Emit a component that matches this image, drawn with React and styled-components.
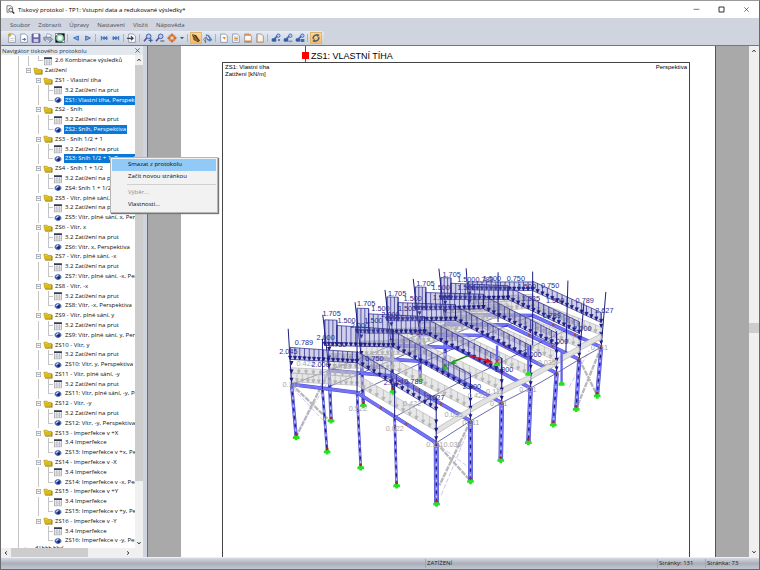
import React from "react";
import styled, { createGlobalStyle, css } from "styled-components";

const GlobalStyle = createGlobalStyle`
  * {
    box-sizing: border-box;
  }
  body {
    margin: 0;
    font-family: "Open Sans", "Noto Sans", sans-serif;
    font-size: 6px;
    color: #111;
  }
  button {
    margin: 0;
    padding: 0;
    border: 0;
    background: none;
    font: inherit;
    color: inherit;
  }
`;

const Window = styled.div`
  display: flex;
  flex-direction: column;
  height: 100vh;
  border: 1px solid #6a6a6a;
  border-top-color: #9a9a9a;
  background: #cfd4de;
  overflow: hidden;
`;

const TitleBar = styled.header`
  display: flex;
  align-items: center;
  height: 17px;
  padding-left: 5px;
  background: #fff;
`;

const Title = styled.h1`
  flex: 1;
  margin: 0 0 0 3px;
  font-size: 6px;
  font-weight: 400;
  color: #000;
`;

const WindowButton = styled.button`
  display: grid;
  place-items: center;
  width: 25px;
  height: 17px;
`;

const MenuBar = styled.nav`
  display: flex;
  align-items: center;
  gap: 8px;
  height: 13px;
  padding: 0 9px;
  color: #484d57;
`;

const ToolRow = styled.div`
  display: flex;
  height: 15px;
  border-bottom: 1px solid #777;
`;

const Tools = styled.div`
  display: flex;
  align-items: center;
  padding: 0 2px 0 5px;
  border-radius: 0 3px 3px 0;
  background: linear-gradient(#e6ebf4, #d3dae6 60%, #c5cddb);
`;

const Tool = styled.button`
  display: grid;
  place-items: center;
  width: ${(p) => (p.$narrow ? "8px" : "12px")};
  height: 12px;
  ${(p) =>
    p.$active &&
    css`
      background: linear-gradient(#fbdb9c, #f6b95a);
      box-shadow: 0 0 0 1px #e0b56c inset;
    `}
`;

const Divider = styled.span`
  width: 1px;
  height: 8px;
  margin: 0 2px 0 1px;
  background: #aab2c2;
`;

const Body = styled.div`
  display: flex;
  flex: 1;
  min-height: 0;
`;

const Navigator = styled.aside`
  display: flex;
  flex-direction: column;
  width: 142px;
  margin-right: 4px;
  background: #fff;
`;

const NavHeader = styled.div`
  display: flex;
  align-items: center;
  justify-content: space-between;
  height: 9px;
  padding: 0 1px;
  background: #e3e7ee;
  color: #30353f;
`;

const CloseButton = styled.button`
  width: 9px;
  height: 9px;
  line-height: 0;
`;

const TreeArea = styled.div`
  display: flex;
  flex: 1;
  min-height: 0;
`;

const Tree = styled.div`
  display: flex;
  flex-direction: column;
  flex: 1;
  min-width: 0;
  padding: 1px 0 0 12px;
  overflow: hidden;
`;

const Row = styled.div`
  display: flex;
  align-items: stretch;
  flex: 1 1 0;
  min-height: 0;
  white-space: nowrap;
  ${(p) =>
    p.$cut &&
    css`
      flex: 0 0 2px;
      overflow: hidden;
    `}
`;

const Guide = styled.span`
  flex: none;
  width: 10px;
  background:
    linear-gradient(#c4c4c4, #c4c4c4) 5px 0 / ${(p) => (p.$line ? "1px" : "0")} ${(p) => (p.$half ? "50%" : "100%")} no-repeat,
    linear-gradient(#c4c4c4, #c4c4c4) 5px 50% / ${(p) => (p.$branch ? "5px" : "0")} 1px no-repeat;
`;

const Expander = styled.button`
  display: grid;
  place-items: center;
  flex: none;
  width: 10px;
`;

const RowIcon = styled.span`
  display: grid;
  place-items: center;
  flex: none;
  width: 10px;
`;

const Label = styled.span`
  align-self: center;
  margin-left: 1px;
  padding: 0 1px;
  line-height: 9px;
  color: #0c0c0c;
  ${(p) =>
    p.$selected &&
    css`
      background: #0a78d7;
      color: #fff;
    `}
`;

const ScrollTrack = styled.div`
  display: flex;
  flex: none;
  flex-direction: ${(p) => (p.$across ? "row" : "column")};
  ${(p) => (p.$across ? "height" : "width")}: ${(p) => p.$size};
  background: #f0f0f0;
`;

const ScrollButton = styled.button`
  display: grid;
  place-items: center;
  flex: none;
  width: 10px;
  height: 10px;
  align-self: center;
`;

const Thumb = styled.div`
  flex: ${(p) => p.$grow};
  background: #cdcdcd;
`;

const Gap = styled.div`
  flex: ${(p) => p.$grow};
`;

const Viewer = styled.main`
  display: flex;
  flex: 1;
  min-width: 0;
  border-left: 1px solid #6d6d6d;
  background: #a9a9a9;
`;

const Sheet = styled.article`
  display: flex;
  flex-direction: column;
  flex: 1;
  min-width: 0;
  margin: 0 33px;
  padding: 0 25px 0 41px;
  border-right: 1px solid #555;
  background: #fff;
`;

const SheetHead = styled.div`
  display: flex;
  align-items: center;
  height: 16px;
  padding-left: 80px;
`;

const Marker = styled.span`
  align-self: stretch;
  width: 7px;
  background:
    linear-gradient(#f00, #f00) 0 6px / 7px 7px no-repeat,
    linear-gradient(#555, #555) 3px 0 / 1px 100% no-repeat;
`;

const SheetTitle = styled.h2`
  margin: 3px 0 0 2px;
  font: 400 9px/10px "Liberation Sans", sans-serif;
  color: #000;
`;

const Figure = styled.section`
  display: flex;
  flex-direction: column;
  flex: 1;
  min-height: 0;
  border: 1px solid #444;
  border-bottom: 0;
`;

const Caption = styled.div`
  display: flex;
  justify-content: space-between;
  padding: 1px 2px;
  font: 6px/7px "Liberation Sans", sans-serif;
  color: #000;
`;

const Drawing = styled.svg`
  flex: 1;
  width: 100%;
  min-height: 0;
`;

const StatusBar = styled.footer`
  display: grid;
  grid-template-columns: 424px 1fr 48px 54px;
  align-items: center;
  height: 12px;
  border-top: 1px solid #eceef2;
  background: linear-gradient(#d6dae2, #a9afba 50%, #c1c6d0);
  color: #222;
`;

const StatusCell = styled.span`
  padding-left: 1px;
  line-height: 9px;
  border-left: ${(p) => (p.$plain ? "0" : "1px solid #a0a6b1")};
`;

const Menu = styled.div`
  position: absolute;
  left: 110px;
  top: 157px;
  width: 108px;
  padding: 1px;
  border: 1px solid #b5b5b5;
  background: #f2f2f2;
  box-shadow: 1px 1px 1px #777;
`;

const MenuItem = styled.button`
  display: block;
  width: 100%;
  height: 12px;
  padding: 0 0 2px 16px;
  text-align: left;
  line-height: 10px;
  color: ${(p) => (p.disabled ? "#8c8c8c" : "#080808")};
  background: ${(p) => (p.$hover ? "#91c9f7" : "none")};
`;

const MenuRule = styled.hr`
  height: 1px;
  margin: 1px 0 2px 15px;
  border: 0;
  background: #d0d0d0;
`;

/* ---------- small icons ---------- */

const Icon = ({ children, size = 12 }) => (
  <svg width={size} height={size} viewBox="0 0 36 36" fill="none" aria-hidden="true">
    {children}
  </svg>
);

const Arrow = ({ turn = 0 }) => (
  <svg width="6" height="6" viewBox="0 0 18 18" fill="none" aria-hidden="true">
    <path d="M4 12l5-6 5 6" stroke="#444" strokeWidth="3" transform={`rotate(${turn} 9 9)`} />
  </svg>
);

const Sheetlet = ({ children, fill = "#fff" }) => (
  <Icon>
    <path d="M8 6h14l6 6v19H8z" fill={fill} stroke="#707a90" strokeWidth="2" />
    {children}
  </Icon>
);

const Lens = ({ children }) => (
  <Icon>
    <path d="M15 17L6 28" stroke="#5b4f9a" strokeWidth="5" />
    <circle cx="20" cy="13" r="7" fill="#b8cdf2" stroke="#4763a8" strokeWidth="3" />
    {children}
  </Icon>
);

const Key = ({ children }) => (
  <Icon>
    <path d="M14 20l10-10" stroke="#4a68b0" strokeWidth="5" />
    <circle cx="25" cy="11" r="5" fill="#bfd0f2" stroke="#4a68b0" strokeWidth="3" />
    <rect x="5" y="19" width="14" height="10" rx="4" fill="#365ba8" />
    {children}
  </Icon>
);

const FolderIcon = () => (
  <Icon size={10}>
    <path d="M5 11h12l3 3h14v17H8z" fill="#7d680c" />
    <path d="M3 8h12l3 4h13v15H7z" fill="#e6cb2e" stroke="#a58a10" strokeWidth="2" />
    <path d="M7 27L3 14h23l4 13z" fill="#d8b91e" />
  </Icon>
);

const TableIcon = () => (
  <Icon size={10}>
    <rect x="5" y="6" width="26" height="26" fill="#fff" stroke="#8a8a92" strokeWidth="2" />
    <path d="M4 8h28" stroke="#30354e" strokeWidth="6" />
    <path d="M5 18h26M5 25h26M14 10v22M23 10v22" stroke="#9a9aa2" strokeWidth="2" />
  </Icon>
);

const EyeIcon = () => (
  <Icon size={10}>
    <path d="M4 18c5-13 23-13 28 0c-5 13-23 13-28 0z" fill="#93a7dc" />
    <circle cx="18" cy="18" r="10" fill="#3a55a6" />
    <path d="M11 16h6v-6" stroke="#c9d5fa" strokeWidth="5" />
    <circle cx="20" cy="20" r="5" fill="#18265f" />
  </Icon>
);

const BoxIcon = () => (
  <svg width="5" height="5" viewBox="0 0 15 15" aria-hidden="true">
    <rect x="1" y="1" width="13" height="13" fill="#fff" stroke="#999" strokeWidth="2" />
    <path d="M4 7h7" stroke="#3c50a0" strokeWidth="2" />
  </svg>
);

const CrossIcon = () => (
  <svg width="7" height="7" viewBox="0 0 21 21" aria-hidden="true">
    <path d="M4 4l13 13M17 4L4 17" stroke="#333" strokeWidth="2" />
  </svg>
);

/* ---------- toolbar content ---------- */

const tools = [
  { name: "Nový", icon: <Sheetlet><path d="M6 9h10M11 4v10" stroke="#d9a514" strokeWidth="4" /><path d="M13 19h10M13 25h10" stroke="#9aa3b5" strokeWidth="2" /></Sheetlet> },
  { name: "Otevřít", icon: <Sheetlet><path d="M13 22h9l-3-4M22 22l-3 4" stroke="#365ba8" strokeWidth="3" /></Sheetlet> },
  { name: "Uložit", icon: <Icon><path d="M6 6h24v25H6z" fill="#6f68ad" stroke="#514a90" strokeWidth="2" /><path d="M11 6h14v10H11z" fill="#f4f4fb" /><path d="M11 21h14v9H11z" fill="#c9cbe4" /></Icon> },
  { name: "Tisk", icon: <Icon><path d="M12 15l4-10 12 4-3 10z" fill="#fff" stroke="#7b8499" strokeWidth="2" /><path d="M5 16l19-1 8 7-9 9-17-7z" fill="#a3aac2" stroke="#666e88" strokeWidth="2" /><path d="M12 25l9 4" stroke="#f2f4f8" strokeWidth="3" /></Icon> },
  { name: "Převzít", icon: <Icon><rect x="4" y="4" width="28" height="28" fill="#161616" /><circle cx="18" cy="18" r="9" fill="#fff" stroke="#8fe0b4" strokeWidth="5" /><path d="M5 5h8l-8 8zM31 31h-8l8-8z" fill="#fff" /></Icon> },
  null,
  { name: "Zpět", icon: <Icon><path d="M25 12v13L11 18z" fill="#8fb2e4" stroke="#3d6cba" strokeWidth="3" /></Icon> },
  { name: "Vpřed", icon: <Icon><path d="M11 12v13l14-7z" fill="#8fb2e4" stroke="#3d6cba" strokeWidth="3" /></Icon> },
  null,
  { name: "První", icon: <Icon><path d="M10 12v13M19 14v9l-6-5zM27 14v9l-6-5z" fill="#6a94d6" stroke="#3d6cba" strokeWidth="3" /></Icon> },
  { name: "Poslední", icon: <Icon><path d="M26 12v13M9 14v9l6-5zM17 14v9l6-5z" fill="#6a94d6" stroke="#3d6cba" strokeWidth="3" /></Icon> },
  null,
  { name: "Jít na", icon: <Sheetlet><path d="M3 19h17M15 13l6 6-6 6" stroke="#3c4458" strokeWidth="4" /></Sheetlet> },
  null,
  { name: "Hledat", icon: <Lens><path d="M20 25h12M26 19v12" stroke="#4763a8" strokeWidth="4" /></Lens> },
  { name: "Hledat další", icon: <Lens><path d="M19 27h12" stroke="#8a7d92" strokeWidth="5" /></Lens> },
  { name: "Posun", icon: <Icon><circle cx="18" cy="18" r="8" stroke="#e68640" strokeWidth="7" /><path d="M18 4v8M18 24v8M4 18h8M24 18h8" stroke="#a8501c" strokeWidth="3" /></Icon> },
  { name: "Více", narrow: true, icon: <Icon size={6}><path d="M6 12h24L18 26z" fill="#555" /></Icon> },
  null,
  { name: "Navigátor", active: true, icon: <Icon><path d="M6 7l12 2 12 17-6 5-13-7z" fill="#4c3a2e" /><path d="M10 9l13 17M8 15l13 13" stroke="#e79a35" strokeWidth="2" /></Icon> },
  { name: "Výběr", icon: <Icon><path d="M11 7l10 2 10 15-8 5-9-6z" fill="#5b82c4" /><path d="M15 12l5 9" stroke="#fff" strokeWidth="3" /><path d="M5 21l6-5v16z" fill="#fff" stroke="#445" strokeWidth="2" /></Icon> },
  null,
  { name: "Titulní list", icon: <Sheetlet><path d="M13 15h11l-5 8z" fill="#f08a28" /></Sheetlet> },
  { name: "Obsah", icon: <Sheetlet><path d="M12 15h12M12 25h12" stroke="#8b93a8" strokeWidth="2" /><path d="M13 20h11" stroke="#f08a28" strokeWidth="5" /></Sheetlet> },
  { name: "Záhlaví", icon: <Sheetlet><path d="M8 9h18M8 28h19" stroke="#ee7f22" strokeWidth="5" /></Sheetlet> },
  { name: "Okraje", icon: <Sheetlet fill="#fdf1e2"><path d="M10 9v21h17" stroke="#f2a04c" strokeWidth="3" /></Sheetlet> },
  null,
  { name: "Vazba", icon: <Key><circle cx="27" cy="24" r="3" fill="#365ba8" /></Key> },
  { name: "Odemknout", icon: <Key><path d="M19 28h12" stroke="#7f93c4" strokeWidth="5" /></Key> },
  { name: "Zamknout", icon: <Key><path d="M20 21h11v9H20z" fill="#4a68b0" /></Key> },
  null,
  { name: "Aktualizovat", active: true, icon: <Icon><path d="M10 21a9 9 0 0 1 14-10M26 15a9 9 0 0 1-14 10" stroke="#536179" strokeWidth="5" /><path d="M19 5l10 3-6 8zM17 31L7 28l6-8z" fill="#536179" /></Icon> },
];

/* ---------- navigator rows ---------- */

const cases = [
  ["Vlastní tíha", "Vlastní tíha"],
  ["Sníh", "Sníh"],
  ["Sníh 1/2 + 1", "Sníh 1/2 + 1"],
  ["Sníh 1 + 1/2", "Sníh 1 + 1/2"],
  ["Vítr, plné sání, x", "Vítr, plné sání, x"],
  ["Vítr, x", "Vítr, x"],
  ["Vítr, plné sání, -x", "Vítr, plné sání, -x"],
  ["Vítr, -x", "Vítr, -x"],
  ["Vítr, plné sání, y", "Vítr, plné sání, y"],
  ["Vítr, y", "Vítr, y"],
  ["Vítr, plné sání, -y", "Vítr, plné sání, -y"],
  ["Vítr, -y", "Vítr, -y"],
  ["Imperfekce v +X", "Imperfekce v +x"],
  ["Imperfekce v -X", "Imperfekce v -x"],
  ["Imperfekce v +Y", "Imperfekce v +y"],
  ["Imperfekce v -Y", "Imperfekce v -y"],
];

const LoadCase = ({ index, names }) => {
  const no = index + 1;
  const last = no === cases.length;
  return (
    <>
      <Row role="treeitem">
        <Guide $line />
        <Guide />
        <Expander aria-label={`Sbalit ZS${no}`}><BoxIcon /></Expander>
        <RowIcon><FolderIcon /></RowIcon>
        <Label>ZS{no} - {names[0]}</Label>
      </Row>
      <Row role="treeitem">
        <Guide $line />
        <Guide />
        <Guide $line={!last} />
        <Guide $line $branch />
        <RowIcon><TableIcon /></RowIcon>
        <Label>{index < 12 ? "3.2 Zatížení na prut" : "3.4 Imperfekce"}</Label>
      </Row>
      <Row role="treeitem" aria-selected={index < 3}>
        <Guide $line />
        <Guide />
        <Guide $line={!last} />
        <Guide $line $half $branch />
        <RowIcon><EyeIcon /></RowIcon>
        <Label $selected={index < 3}>ZS{no}: {names[1]}, Perspektiva</Label>
      </Row>
    </>
  );
};

/* ---------- structure model ---------- */

// eave, ridge and front eave points of the seven frames, column bases included
const frames = [
  { l: [65, 387], m: [262, 412], e: [500, 563], lb: [79, 545], eb: [501, 745] },
  { l: [178, 345], m: [370, 362], e: [603, 497], lb: [184, 495], eb: [603, 677] },
  { l: [275, 307], m: [465, 318], e: [697, 442], lb: [281, 449], eb: [694, 614] },
  { l: [365, 270], m: [558, 277], e: [784, 398], lb: [370, 408], eb: [777, 560] },
  { l: [450, 237], m: [642, 240], e: [862, 353], lb: [452, 371], eb: [852, 507] },
  { l: [527, 206], m: [716, 209], e: [930, 312], lb: [527, 337], eb: [921, 460] },
  { l: [600, 178], m: [790, 180], e: [996, 275], lb: [683, 329], eb: [984, 420] },
];

const gablePosts = [
  [[158, 402], [172, 588]],
  [[262, 412], [273, 636]],
  [[375, 487], [381, 690]],
];

const NAVY = "#1c1c86";
const pt = (a) => a.join(",");
const up = (p, d) => [p[0], p[1] - d];
const mix = (a, b, t) => [a[0] + (b[0] - a[0]) * t, a[1] + (b[1] - a[1]) * t];

const Load = ({ a, b, ha, hb, n, gray }) => {
  const stroke = gray ? "#b4b4b4" : NAVY;
  const arrows = Array.from({ length: n + 1 }, (_, i) => i / n);
  return (
    <g stroke={stroke} fill={stroke} strokeWidth="2">
      <polygon
        points={[a, b, up(b, hb), up(a, ha)].map(pt).join(" ")}
        fill={gray ? "#d0d0d0" : "#7878c4"}
        fillOpacity={gray ? "0.5" : "0.35"}
      />
      {arrows.map((t) => {
        const [x, y] = mix(a, b, t);
        const h = ha + (hb - ha) * t;
        return <path key={t} d={`M${x} ${y - h}V${y}m-5 -10h10l-5 10z`} />;
      })}
    </g>
  );
};

const Beam = ({ points, w = 8 }) => (
  <g fill="none" strokeLinejoin="round">
    <polyline points={points.map(pt).join(" ")} stroke="#5050c8" strokeWidth={w + 2} />
    <polyline points={points.map(pt).join(" ")} stroke="#7474fa" strokeWidth={w - 1} />
  </g>
);

const Column = ({ top, base, w = 10 }) => (
  <g>
    <Beam points={[top, base]} w={w} />
    <path d={`M${pt(top)}L${pt(base)}`} stroke={NAVY} strokeWidth="4" strokeDasharray="9 15" />
    <path d={`M${pt(top)}L${pt(base)}`} stroke="#c9c9d8" strokeWidth="4" strokeDasharray="5 19" strokeDashoffset="9" />
    <path d={`M${base[0]} ${base[1] - 6}l10 5v7h-6v4h-8v-4h-6v-7z`} fill="#23e123" />
    <circle cx={base[0]} cy={base[1] - 7} r="4" fill="#a02a2a" />
  </g>
);

const Frame = ({ f, i }) => {
  const s = 1 - i * 0.04;
  const side = i > 0 && i < 6;
  const l = [f.l[0] - (side ? 13 : 4), f.l[1] - 75];
  const m = up(f.m, 90 - i * 2.5);
  const e = up(f.e, 98 - i * 4);
  const near = [l[0] + 38 * s, l[1] + 1];
  return (
    <g>
      {i < 6 && <Column top={f.l} base={f.lb} w={8} />}
      <Load a={up(f.l, 8)} b={up(f.m, 22)} ha={26} hb={26} n={12} gray />
      <Load a={up(f.l, 34)} b={up(f.m, 48)} ha={16} hb={16} n={9} gray />
      <Load a={up(f.m, 22)} b={up(f.e, 36)} ha={32 * s} hb={32 * s} n={12} gray />
      <Beam points={[f.l, f.m, f.e]} w={9} />
      <Column top={f.e} base={f.eb} w={13 - i / 2} />
      {side ? (
        <>
          <Load a={l} b={near} ha={80 - i * 3} hb={80 - i * 3} n={3} />
          <Load a={near} b={m} ha={64 - i * 3} hb={56 - i * 3} n={12} />
          <Load a={m} b={e} ha={52 - i * 3} hb={50 - i * 3} n={14} />
        </>
      ) : (
        <>
          <Load a={l} b={m} ha={36 - i * 2} hb={32 - i} n={14} />
          <Load a={m} b={e} ha={34 - i} hb={36 - i} n={14} />
        </>
      )}
      <path
        d={`M${l[0] - 6} ${l[1] - (i === 6 ? 65 : 92)}L${pt(f.l)}M${e[0] + (i > 4 ? 14 : 0)} ${e[1] - (i > 4 ? 92 : 44)}L${pt(f.e)}`}
        stroke={NAVY}
        strokeWidth="3"
      />
      {[20, 45, 70].map((d) => (
        <path key={d} d={`M${f.l[0] - 6} ${f.l[1] - d}h12l-6 13zM${f.e[0] - 6} ${f.e[1] - d}h12l-6 13z`} fill={NAVY} />
      ))}
      {[0.3, 0.62, 1].map((t) => {
        const [x, y] = mix(f.m, f.e, t);
        return <circle key={t} cx={x} cy={y} r="4" fill="#b5473f" />;
      })}
    </g>
  );
};

const grayNotes = [
  ["0.111", 38, 395], ["0.422", 80, 332], ["0.789", 190, 340], ["0.522", 237, 467], ["0.022", 348, 526],
  ["0.1110.035", 470, 574], ["0.055", 525, 484], ["0.111", 578, 508], ["0.111", 662, 451], ["0.111", 750, 409],
  ["0.422", 595, 428], ["0.111", 650, 415], ["0.111", 965, 284], ["0.422", 400, 452], ["0.035", 805, 330],
];

const navyNotes = [
  ["1.705", 158, 183], ["1.705", 262, 151], ["1.705", 355, 121], ["1.705", 440, 91], ["1.705", 519, 64],
  ["1.500", 203, 202], ["1.500", 305, 166], ["1.500", 402, 135], ["1.500", 486, 103], ["1.5000.789", 563, 79],
  ["1.500", 640, 77], ["0.750", 712, 77], ["0.750", 815, 98], ["0.789", 919, 142], ["2.627", 978, 172],
  ["0.789", 75, 270], ["2.045", 28, 295], ["2.000", 140, 253], ["0.750", 175, 276], ["2.000", 125, 334],
  ["2.000", 243, 219], ["1.500", 284, 202], ["1.500", 385, 165], ["2.000", 335, 184], ["0.750", 287, 317],
  ["1.500", 563, 103], ["1.500", 490, 133], ["1.500", 745, 100], ["1.335", 757, 135], ["1.500", 830, 143],
  ["2.045", 342, 390], ["0.789", 404, 385], ["2.627", 470, 434], ["2.000", 580, 400], ["2.000", 677, 350],
  ["2.000", 762, 306], ["2.000", 842, 265], ["2.000", 912, 226], ["1.500", 420, 238], ["0.789", 820, 188],
];

const Model = () => (
  <Drawing viewBox="-141 -525 1401 1425" role="img" aria-label="Perspektiva konstrukce se zatížením">
    <g stroke="#b9b9b9" strokeWidth="7" fill="none" strokeDasharray="16 3">
      <path d="M65 387L178 495M178 345L79 545M500 563L603 677M603 497L510 690M930 312L984 420M996 275L921 460" />
    </g>
    <path d="M70 400l90 95M180 370L85 525M515 575L603 640M590 540L515 720M900 395l60 -110" stroke="#a9a9f2" strokeWidth="2" strokeDasharray="14 6" fill="none" />
    {[...frames].reverse().map((f, k) => {
      const i = frames.length - 1 - k;
      const next = frames[i + 1];
      return (
        <g key={i}>
          {next && (
            <g fill="none" stroke="#1f1f80" strokeWidth="2">
              <path d={`M${pt(f.l)}L${pt(next.l)}M${pt(f.m)}L${pt(next.m)}M${pt(f.e)}L${pt(next.e)}`} />
              <path d={`M${pt(mix(f.m, f.e, 0.48))}L${pt(mix(next.m, next.e, 0.48))}`} />
              <path d={`M${pt(mix(f.l, f.m, 0.5))}L${pt(mix(next.l, next.m, 0.5))}`} />
            </g>
          )}
          {next && (
            <polygon
              points={[up(f.e, 44), up(next.e, 40), up(next.e, 24), up(f.e, 26)].map(pt).join(" ")}
              fill="#e2e2e2"
              stroke="#b0b0b0"
              strokeWidth="2"
            />
          )}
          {i === 0 && gablePosts.map(([top, base]) => <Column key={top[0]} top={top} base={base} w={6} />)}
          <Frame f={f} i={i} />
        </g>
      );
    })}
    <path d="M683 270V325M777 270V354M877 290V384" stroke="#6464e4" strokeWidth="7" />
    <path d="M683 317l9 8v7h-18v-7zM777 346l9 8v7h-18v-7zM877 376l9 8v7h-18v-7z" fill="#23e123" />
    <path d="M158 402V250M262 412V200M375 487V385M790 48V270M896 75L890 290M686 50V200" stroke={NAVY} strokeWidth="3" fill="none" />
    <path d="M598 300L545 322" stroke="#138013" strokeWidth="4" />
    <path d="M538 327l16 -15 6 13z" fill="#13b013" />
    <path d="M598 300L655 316" stroke="#e01010" strokeWidth="4" />
    <path d="M672 321l-20 -13 -4 15z" fill="#d01010" />
    <g fontFamily="Liberation Sans, sans-serif" fontSize="22">
      <g fill="#a6a6a6">
        {grayNotes.map(([t, x, y]) => <text key={t + x} x={x} y={y}>{t}</text>)}
      </g>
      <g fill="#2c2c8e">
        {navyNotes.map(([t, x, y]) => <text key={t + x} x={x} y={y}>{t}</text>)}
      </g>
      <text x="518" y="342" fill="#13b013">Y</text>
      <text x="677" y="326" fill="#e01010">X</text>
    </g>
  </Drawing>
);

const App = () => {
  return (
    <>
      <GlobalStyle />
      <Window>
        <TitleBar>
          <Icon size={9}>
            <path d="M4 3h16l6 6v8M4 3v26h8" stroke="#555" strokeWidth="3" />
            <circle cx="19" cy="20" r="8" fill="#e6eef7" stroke="#333" strokeWidth="3" />
            <path d="M25 26l8 8" stroke="#222" strokeWidth="5" />
          </Icon>
          <Title>Tiskový protokol - TP1: Vstupní data a redukované výsledky*</Title>
          <WindowButton aria-label="Minimalizovat">
            <svg width="7" height="7" viewBox="0 0 21 21"><path d="M2 10h17" stroke="#333" strokeWidth="2" /></svg>
          </WindowButton>
          <WindowButton aria-label="Maximalizovat">
            <svg width="7" height="7" viewBox="0 0 21 21"><path d="M3 3h15v15H3z" fill="none" stroke="#333" strokeWidth="3" /></svg>
          </WindowButton>
          <WindowButton aria-label="Zavřít"><CrossIcon /></WindowButton>
        </TitleBar>

        <MenuBar>
          {["Soubor", "Zobrazit", "Úpravy", "Nastavení", "Vložit", "Nápověda"].map((m) => (
            <button key={m}>{m}</button>
          ))}
        </MenuBar>

        <ToolRow>
          <Tools>
            {tools.map((t, i) =>
              t ? (
                <Tool key={i} aria-label={t.name} $active={t.active} $narrow={t.narrow}>{t.icon}</Tool>
              ) : (
                <Divider key={i} />
              )
            )}
          </Tools>
        </ToolRow>

        <Body>
          <Navigator>
            <NavHeader>
              <span>Navigátor tiskového protokolu</span>
              <CloseButton aria-label="Zavřít navigátor"><CrossIcon /></CloseButton>
            </NavHeader>
            <TreeArea>
              <Tree role="tree">
                <Row role="treeitem">
                  <Guide $line />
                  <Guide $line />
                  <Guide $line $half $branch />
                  <RowIcon><TableIcon /></RowIcon>
                  <Label>2.6 Kombinace výsledků</Label>
                </Row>
                <Row role="treeitem">
                  <Guide $line />
                  <Expander aria-label="Sbalit Zatížení"><BoxIcon /></Expander>
                  <RowIcon><FolderIcon /></RowIcon>
                  <Label>Zatížení</Label>
                </Row>
                {cases.map((names, i) => (
                  <LoadCase key={i} index={i} names={names} />
                ))}
                <Row role="treeitem" $cut>
                  <Guide $line />
                  <RowIcon><FolderIcon /></RowIcon>
                  <Label>STEEL EC3</Label>
                </Row>
              </Tree>
              <ScrollTrack $size="8px">
                <ScrollButton aria-label="Nahoru"><Arrow /></ScrollButton>
                <Thumb $grow={415} />
                <Gap $grow={57} />
                <ScrollButton aria-label="Dolů"><Arrow turn={180} /></ScrollButton>
              </ScrollTrack>
            </TreeArea>
            <ScrollTrack $across $size="9px">
              <ScrollButton aria-label="Vlevo"><Arrow turn={270} /></ScrollButton>
              <Thumb $grow={79} />
              <Gap $grow={36} />
              <ScrollButton aria-label="Vpravo"><Arrow turn={90} /></ScrollButton>
              <ScrollButton as="span" />
            </ScrollTrack>
          </Navigator>

          <Viewer>
            <Sheet>
              <SheetHead>
                <Marker />
                <SheetTitle>ZS1: VLASTNÍ TÍHA</SheetTitle>
              </SheetHead>
              <Figure>
                <Caption>
                  <span>ZS1: Vlastní tíha<br />Zatížení [kN/m]</span>
                  <span>Perspektiva</span>
                </Caption>
                <Model />
              </Figure>
            </Sheet>
            <ScrollTrack $size="10px">
              <ScrollButton aria-label="Předchozí"><Arrow /></ScrollButton>
              <Gap $grow={267} />
              <Thumb $grow={10} />
              <Gap $grow={214} />
              <ScrollButton aria-label="Další"><Arrow turn={180} /></ScrollButton>
            </ScrollTrack>
          </Viewer>
        </Body>

        <StatusBar>
          <StatusCell $plain />
          <StatusCell>ZATÍŽENÍ</StatusCell>
          <StatusCell>Stránky: 131</StatusCell>
          <StatusCell>Stránka: 73</StatusCell>
        </StatusBar>
      </Window>

      <Menu role="menu">
        <MenuItem role="menuitem" $hover>Smazat z protokolu</MenuItem>
        <MenuItem role="menuitem">Začít novou stránkou</MenuItem>
        <MenuRule />
        <MenuItem role="menuitem" disabled>Výběr...</MenuItem>
        <MenuItem role="menuitem">Vlastnosti...</MenuItem>
      </Menu>
    </>
  );
};

export default App;
